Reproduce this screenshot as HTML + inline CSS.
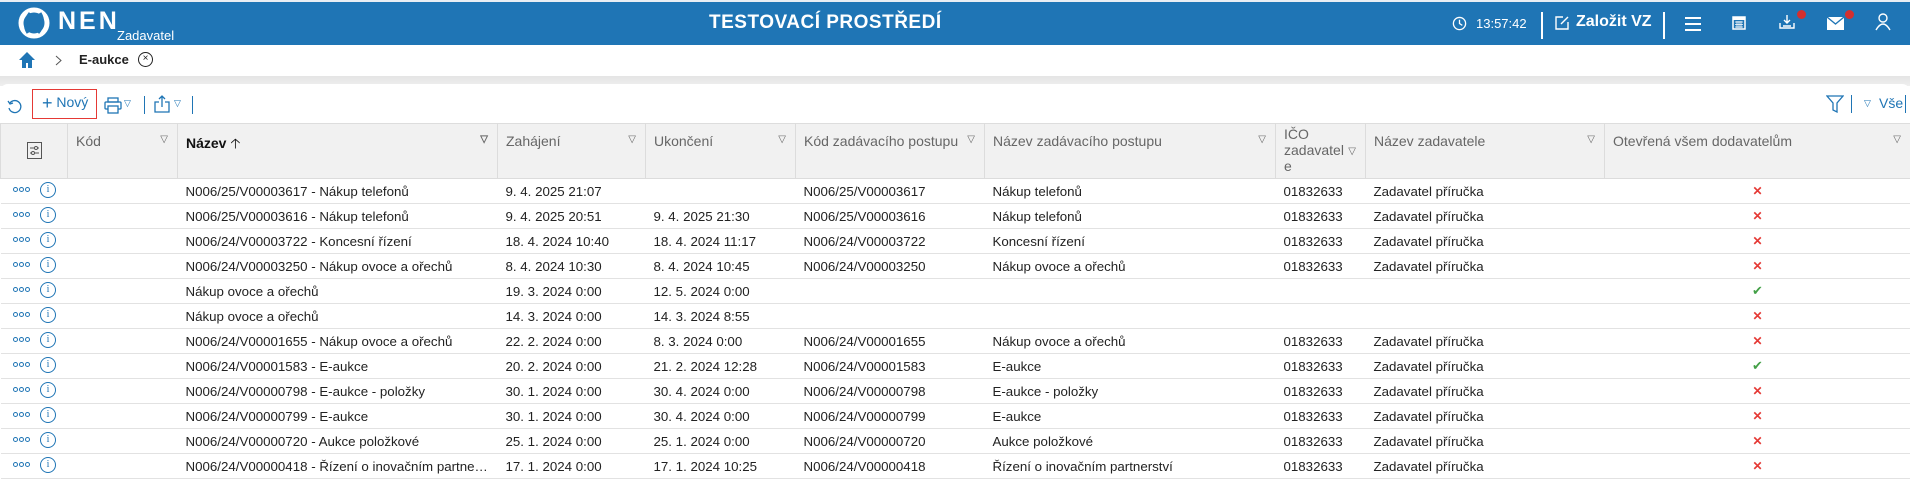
<!DOCTYPE html>
<html><head><meta charset="utf-8"><style>
*{box-sizing:border-box;margin:0;padding:0}
body{width:1910px;height:482px;overflow:hidden;background:#fff;font-family:"Liberation Sans",sans-serif;position:relative;color:#222}
.top{position:absolute;left:0;top:0;width:1910px;height:45px;background:#1f75b5;color:#fff;border-top:2px solid #e8eef4}
.abs{position:absolute}
.bc{position:absolute;top:45px;left:0;width:1910px;height:31px;background:#fff}
.band{position:absolute;top:76px;left:0;width:1910px;height:10px;background:linear-gradient(#e4e4e4,#efefef)}
.card{position:absolute;top:84px;left:0;width:1910px;height:398px;background:#fff;border-radius:8px 8px 0 0}
table{position:absolute;left:0;top:123px;border-collapse:collapse;table-layout:fixed;width:1910px;font-size:13.3px}
th{background:#f1f1f1;color:#666;font-weight:normal;text-align:left;vertical-align:top;height:55px;border:1px solid #dcdcdc;border-top:1px solid #ddd;padding:9px 8px 0;position:relative;font-size:14px}
th .f{position:absolute;right:9px;top:10px;font-size:10px;color:#666}
td{height:25px;border-bottom:1px solid #e2e2e2;padding:0 8px;white-space:nowrap;overflow:hidden;text-overflow:ellipsis;border-left:none}
.x{color:#e53935;text-align:center;font-weight:bold;font-size:12px}
.ok{color:#43a047;text-align:center;font-size:13px}
</style></head><body>
<div class="top">
 <svg class="abs" style="left:18px;top:5px" width="32" height="32" viewBox="0 0 32 32"><circle cx="16" cy="16" r="13" fill="none" stroke="#fff" stroke-width="5"/><path d="M10 26 Q4 16 12 6" stroke="#1f75b5" stroke-width="3" fill="none"/><path d="M22 6 Q28 16 20 26" stroke="#1f75b5" stroke-width="3" fill="none"/></svg>
 <div class="abs" style="left:58px;top:5px;font-size:25px;font-weight:bold;letter-spacing:3px">NEN</div>
 <div class="abs" style="left:117px;top:26px;font-size:13px">Zadavatel</div>
 <div class="abs" style="left:709px;top:10px;font-size:19px;font-weight:bold;letter-spacing:0.5px">TESTOVACÍ PROSTŘEDÍ</div>
 <svg class="abs" style="left:1452px;top:14px" width="15" height="15" viewBox="0 0 16 16"><circle cx="8" cy="8" r="6.5" fill="none" stroke="#fff" stroke-width="1.4"/><path d="M8 4v4l3 2" stroke="#fff" stroke-width="1.4" fill="none"/></svg>
 <div class="abs" style="left:1476px;top:14px;font-size:13px">13:57:42</div>
 <div class="abs" style="left:1541px;top:10px;width:2px;height:27px;background:#fff"></div>
 <svg class="abs" style="left:1554px;top:13px" width="16" height="16" viewBox="0 0 16 16"><path d="M9 2H2v12h12V7" fill="none" stroke="#fff" stroke-width="1.4"/><path d="M7 9l7-7" stroke="#fff" stroke-width="1.4"/></svg>
 <div class="abs" style="left:1576px;top:11px;font-size:16px;font-weight:bold">Založit VZ</div>
 <div class="abs" style="left:1663px;top:10px;width:2px;height:27px;background:#fff"></div>
 <div class="abs" style="left:1685px;top:15px;width:16px;height:2px;background:#fff;box-shadow:0 6px 0 #fff,0 12px 0 #fff"></div>
 <svg class="abs" style="left:1732px;top:13px" width="14" height="15" viewBox="0 0 14 15"><rect x="1" y="2" width="12" height="12" fill="none" stroke="#fff" stroke-width="1.5"/><rect x="1" y="2" width="12" height="3" fill="#fff"/><path d="M3 7h8M3 9.5h8M3 12h8M5 6v7M7 6v7M9 6v7" stroke="#fff" stroke-width=".8"/></svg>
 <svg class="abs" style="left:1779px;top:12px" width="16" height="16" viewBox="0 0 16 16"><path d="M8 1v8M5 6l3 3 3-3M1 9v5h14V9M4 12h8" fill="none" stroke="#fff" stroke-width="1.4"/></svg>
 <div class="abs" style="left:1797px;top:8px;width:9px;height:9px;border-radius:50%;background:#d32f2f"></div>
 <svg class="abs" style="left:1827px;top:15px" width="17" height="13" viewBox="0 0 17 13"><rect x="0" y="0" width="17" height="13" fill="#fff"/><path d="M0 0l8.5 7L17 0" stroke="#1f75b5" stroke-width="1.3" fill="none"/></svg>
 <div class="abs" style="left:1845px;top:8px;width:9px;height:9px;border-radius:50%;background:#d32f2f"></div>
 <svg class="abs" style="left:1875px;top:11px" width="16" height="18" viewBox="0 0 16 18"><circle cx="8" cy="5" r="4" fill="none" stroke="#fff" stroke-width="1.4"/><path d="M1 17q7-12 14 0" fill="none" stroke="#fff" stroke-width="1.4"/></svg>
</div>
<div class="bc">
 <svg class="abs" style="left:19px;top:6px" width="16" height="17" viewBox="0 0 16 17"><path d="M8 1L0 9h3v8h4v-5h2v5h4V9h3z" fill="#1f75b5"/></svg>
 <svg class="abs" style="left:55px;top:10px" width="7" height="11" viewBox="0 0 7 11"><path d="M1 1l5 4.5L1 10" fill="none" stroke="#555" stroke-width="1"/></svg>
 <div class="abs" style="left:79px;top:7px;font-size:13px;font-weight:bold">E-aukce</div>
 <div class="abs" style="left:138px;top:7px;width:15px;height:15px;border:1.5px solid #222;border-radius:50%;font-size:10px;line-height:12px;text-align:center">×</div>
</div>
<div class="band"></div>
<div class="card">
 <svg class="abs" style="left:7px;top:14px" width="16" height="16" viewBox="0 0 16 16"><path d="M3 5a6 6 0 1 1-1 5" fill="none" stroke="#1f75b5" stroke-width="1.3"/><path d="M1 3l2 3 3-1" fill="none" stroke="#1f75b5" stroke-width="1.3"/></svg>
 <div class="abs" style="left:32px;top:5px;width:65px;height:30px;border:1.3px solid #e53935"></div>
 <div class="abs" style="left:42px;top:9px;font-size:14px;color:#1f75b5"><span style="font-size:18px;vertical-align:-2px">+</span> Nový</div>
 <svg class="abs" style="left:104px;top:13px" width="18" height="17" viewBox="0 0 18 17"><rect x="4" y="1" width="10" height="4" fill="none" stroke="#1f75b5" stroke-width="1.3"/><rect x="1" y="5" width="16" height="7" rx="1" fill="none" stroke="#1f75b5" stroke-width="1.3"/><rect x="4" y="9" width="10" height="7" fill="#fff" stroke="#1f75b5" stroke-width="1.3"/></svg>
 <div class="abs" style="left:124px;top:14px;font-size:9px;color:#1f75b5">▽</div>
 <div class="abs" style="left:144px;top:12px;width:1px;height:18px;background:#1f75b5"></div>
 <svg class="abs" style="left:154px;top:11px" width="16" height="18" viewBox="0 0 16 18"><path d="M5 7H1v10h14V7h-4M8 12V1M5 4l3-3 3 3" fill="none" stroke="#1f75b5" stroke-width="1.3"/></svg>
 <div class="abs" style="left:174px;top:14px;font-size:9px;color:#1f75b5">▽</div>
 <div class="abs" style="left:192px;top:12px;width:1px;height:18px;background:#1f75b5"></div>
 <svg class="abs" style="left:1826px;top:11px" width="18" height="18" viewBox="0 0 18 18"><path d="M1 1h16l-6 7v9l-4-2V8z" fill="none" stroke="#1f75b5" stroke-width="1.3"/></svg>
 <div class="abs" style="left:1851px;top:11px;width:1px;height:18px;background:#1f75b5"></div>
 <div class="abs" style="left:1864px;top:14px;font-size:9px;color:#1f75b5">▽</div>
 <div class="abs" style="left:1879px;top:11px;font-size:14px;color:#1f75b5">Vše</div>
 <div class="abs" style="left:1905px;top:11px;width:1px;height:18px;background:#1f75b5"></div>
</div>
<table>
<colgroup><col style="width:67px"><col style="width:110px"><col style="width:320px"><col style="width:148px"><col style="width:150px"><col style="width:189px"><col style="width:291px"><col style="width:90px"><col style="width:239px"><col style="width:306px"></colgroup>
<tr>
<th style="text-align:center;padding-top:18px"><svg width="15" height="17" viewBox="0 0 15 17"><rect x=".5" y=".5" width="14" height="16" fill="none" stroke="#555"/><path d="M3 6h9M3 11h9" stroke="#555"/><circle cx="9" cy="6" r="1.5" fill="#fff" stroke="#555"/><circle cx="6" cy="11" r="1.5" fill="#fff" stroke="#555"/></svg></th>
<th>Kód<span class="f">▽</span></th>
<th style="color:#111;font-weight:bold">Název <span style="font-weight:normal">🡡</span><span class="f">▽</span></th>
<th>Zahájení<span class="f">▽</span></th>
<th>Ukončení<span class="f">▽</span></th>
<th>Kód zadávacího postupu<span class="f">▽</span></th>
<th>Název zadávacího postupu<span class="f">▽</span></th>
<th style="padding-top:2px;line-height:16px">IČO<br>zadavatel<br>e<span class="f" style="top:20px">▽</span></th>
<th>Název zadavatele<span class="f">▽</span></th>
<th>Otevřená všem dodavatelům<span class="f">▽</span></th>
</tr>
<tbody>
<tr><td></td><td></td><td>N006/25/V00003617 - Nákup telefonů</td><td>9. 4. 2025 21:07</td><td></td><td>N006/25/V00003617</td><td>Nákup telefonů</td><td>01832633</td><td>Zadavatel příručka</td><td class="x">✕</td></tr>
<tr><td></td><td></td><td>N006/25/V00003616 - Nákup telefonů</td><td>9. 4. 2025 20:51</td><td>9. 4. 2025 21:30</td><td>N006/25/V00003616</td><td>Nákup telefonů</td><td>01832633</td><td>Zadavatel příručka</td><td class="x">✕</td></tr>
<tr><td></td><td></td><td>N006/24/V00003722 - Koncesní řízení</td><td>18. 4. 2024 10:40</td><td>18. 4. 2024 11:17</td><td>N006/24/V00003722</td><td>Koncesní řízení</td><td>01832633</td><td>Zadavatel příručka</td><td class="x">✕</td></tr>
<tr><td></td><td></td><td>N006/24/V00003250 - Nákup ovoce a ořechů</td><td>8. 4. 2024 10:30</td><td>8. 4. 2024 10:45</td><td>N006/24/V00003250</td><td>Nákup ovoce a ořechů</td><td>01832633</td><td>Zadavatel příručka</td><td class="x">✕</td></tr>
<tr><td></td><td></td><td>Nákup ovoce a ořechů</td><td>19. 3. 2024 0:00</td><td>12. 5. 2024 0:00</td><td></td><td></td><td></td><td></td><td class="ok">✔</td></tr>
<tr><td></td><td></td><td>Nákup ovoce a ořechů</td><td>14. 3. 2024 0:00</td><td>14. 3. 2024 8:55</td><td></td><td></td><td></td><td></td><td class="x">✕</td></tr>
<tr><td></td><td></td><td>N006/24/V00001655 - Nákup ovoce a ořechů</td><td>22. 2. 2024 0:00</td><td>8. 3. 2024 0:00</td><td>N006/24/V00001655</td><td>Nákup ovoce a ořechů</td><td>01832633</td><td>Zadavatel příručka</td><td class="x">✕</td></tr>
<tr><td></td><td></td><td>N006/24/V00001583 - E-aukce</td><td>20. 2. 2024 0:00</td><td>21. 2. 2024 12:28</td><td>N006/24/V00001583</td><td>E-aukce</td><td>01832633</td><td>Zadavatel příručka</td><td class="ok">✔</td></tr>
<tr><td></td><td></td><td>N006/24/V00000798 - E-aukce - položky</td><td>30. 1. 2024 0:00</td><td>30. 4. 2024 0:00</td><td>N006/24/V00000798</td><td>E-aukce - položky</td><td>01832633</td><td>Zadavatel příručka</td><td class="x">✕</td></tr>
<tr><td></td><td></td><td>N006/24/V00000799 - E-aukce</td><td>30. 1. 2024 0:00</td><td>30. 4. 2024 0:00</td><td>N006/24/V00000799</td><td>E-aukce</td><td>01832633</td><td>Zadavatel příručka</td><td class="x">✕</td></tr>
<tr><td></td><td></td><td>N006/24/V00000720 - Aukce položkové</td><td>25. 1. 2024 0:00</td><td>25. 1. 2024 0:00</td><td>N006/24/V00000720</td><td>Aukce položkové</td><td>01832633</td><td>Zadavatel příručka</td><td class="x">✕</td></tr>
<tr><td></td><td></td><td>N006/24/V00000418 - Řízení o inovačním partnerství</td><td>17. 1. 2024 0:00</td><td>17. 1. 2024 10:25</td><td>N006/24/V00000418</td><td>Řízení o inovačním partnerství</td><td>01832633</td><td>Zadavatel příručka</td><td class="x">✕</td></tr>
</tbody></table>
<div id="ic"></div>
<script>
var h='';for(var i=0;i<12;i++){var y=178+i*25;
h+='<div class="abs" style="left:13px;top:'+(y+9)+'px;width:17px;height:6px;display:flex;gap:1px"><i style="width:5px;height:5px;border:1.2px solid #1f75b5;border-radius:50%"></i><i style="width:5px;height:5px;border:1.2px solid #1f75b5;border-radius:50%"></i><i style="width:5px;height:5px;border:1.2px solid #1f75b5;border-radius:50%"></i></div>';
h+='<div class="abs" style="left:40px;top:'+(y+4)+'px;width:16px;height:16px;border:1.3px solid #1f75b5;border-radius:50%;color:#1f75b5;font-size:10px;line-height:13px;text-align:center;font-family:Liberation Serif,serif">i</div>';}
document.getElementById('ic').innerHTML=h;
</script>
</body></html>
